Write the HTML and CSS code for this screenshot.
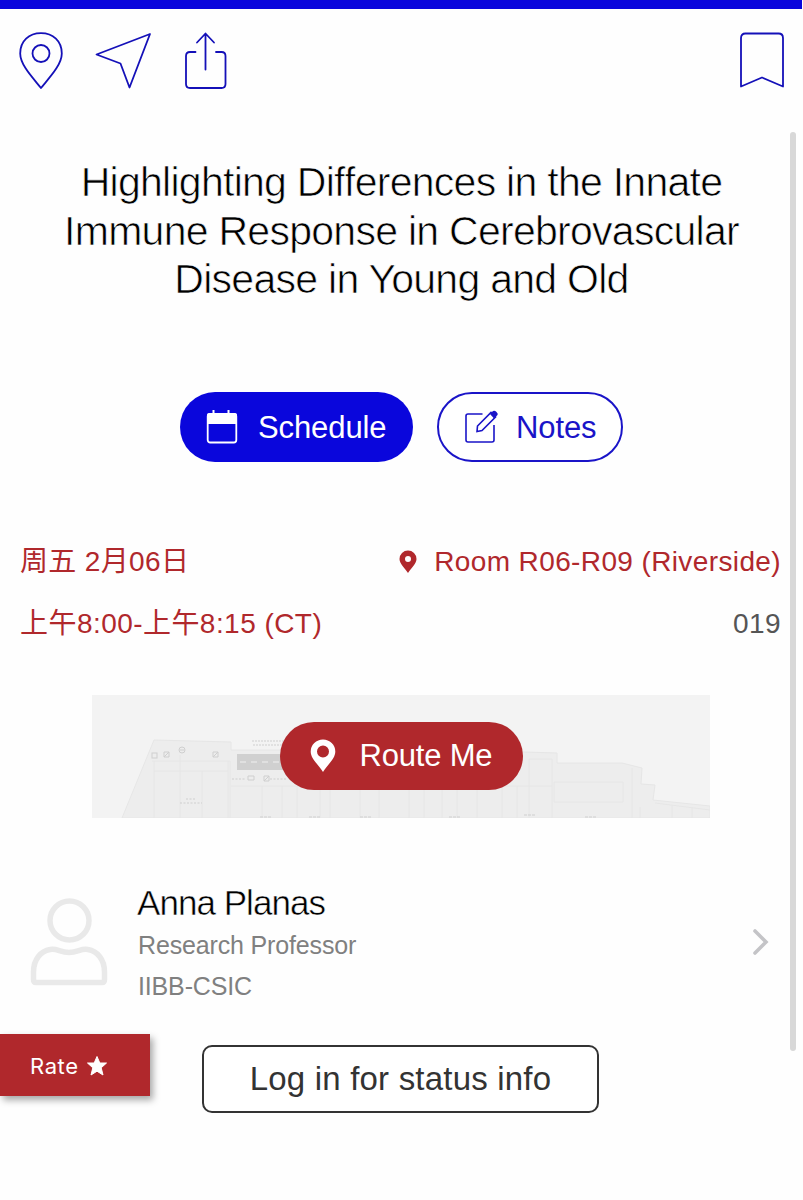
FILE: index.html
```
<!DOCTYPE html>
<html lang="zh">
<head>
<meta charset="UTF-8">
<meta name="viewport" content="width=device-width, initial-scale=1.0">
<title>Session</title>
<link rel="stylesheet" href="styles.css">
</head>
<body>
    <div class="topbar"></div>
    <div class="toolbar">
        <svg class="icon" width="44" height="58" viewBox="0 0 44 58">
            <path d="M22 56C14 46 1.200 33 1.200 21.500C1.200 9 10 1.200 22 1.200S42.800 9 42.800 21.500C42.800 33 30 46 22 56Z"/>
            <circle cx="22" cy="21.500" r="8.500"/>
        </svg>
        <svg class="icon icon-nav" width="58" height="58" viewBox="0 0 58 58">
            <path d="M56 2L2.500 22.500L26.500 31.500L35.500 55.500Z"/>
        </svg>
        <svg class="icon icon-share" width="44" height="58" viewBox="0 0 44 58">
            <path d="M11.500 20H6Q2 20 2 24V52Q2 56 6 56H37.500Q41.500 56 41.500 52V24Q41.500 20 37.500 20H32"/>
            <path d="M21.500 37.500V2M13 10.500L21.500 1.500L30 10.500"/>
        </svg>
        <svg class="icon icon-bookmark" width="46" height="58" viewBox="0 0 46 58">
            <path d="M2 54.500V6Q2 1.500 6.500 1.500H39.500Q44 1.500 44 6V54.500L23 45.500Z"/>
        </svg>
    </div>

    <h1 class="title">
        <span class="line">Highlighting Differences in the Innate</span>
        <span class="line">Immune Response in Cerebrovascular</span>
        <span class="line">Disease in Young and Old</span>
    </h1>

    <div class="actions">
        <button class="btn btn-schedule">
            <svg width="32" height="36" viewBox="0 0 32 36">
                <rect x="1.700" y="5" width="28.600" height="28.500" rx="2.500" fill="none" stroke="#fff" stroke-width="1.800"/>
                <path d="M1 15V6Q1 4 3.500 4H6.500V1H8.500V4H21.500V1H23.500V4H28.500Q31 4 31 6V15Z" fill="#fff"/>
            </svg>
            <span class="label">Schedule</span>
        </button>
        <button class="btn btn-notes">
            <svg width="36" height="36" viewBox="0 0 36 36">
                <path d="M18.500 5H4Q2 5 2 7V31Q2 33 4 33H28Q30 33 30 31V16" fill="none" stroke="#1a14c8" stroke-width="1.600"/>
                <path d="M13.500 17L27 3.500L31.500 8L18 21.500L13 22.500Z" fill="none" stroke="#1a14c8" stroke-width="1.600"/>
                <path d="M26 5L29 2Q30.500 1 32.500 3T33.500 6L30 9.500Z" fill="#1a14c8"/>
            </svg>
            <span class="label">Notes</span>
        </button>
    </div>

    <div class="details">
        <div class="row">
            <span class="date">周五 2月06日</span>
            <span class="room">
                <svg width="18" height="24" viewBox="0 0 18 24">
                    <path fill-rule="evenodd" d="M9 23C6 18.500 .5 13.500 .5 9A8.500 8.500 0 0 1 17.500 9C17.500 13.500 12 18.500 9 23ZM9 6A3 3 0 1 0 9 12A3 3 0 1 0 9 6Z" fill="#b0282c"/>
                </svg>
                Room R06-R09 (Riverside)
            </span>
        </div>
        <div class="row">
            <span class="time">上午8:00-上午8:15 (CT)</span>
            <span class="number">019</span>
        </div>
    </div>

    <div class="map">
        <svg class="plan" width="618" height="123" viewBox="0 0 618 123">
            <path d="M30 123L62 45L139 47V55H240L432 57L465 58V68H530L550 73L549 89L563 90L561 105L618 111V123Z" fill="#ededed" stroke="#e6e6e6"/>
            <path d="M60 66H138V123M62 76H136M62 66V123M88 60V123M110 76V123M136 66V123M139 91H460M170 91V123M190 91V123M205 91V123M228 91V123M238 91V123M268 91V123M287 91V123M317 91V123M332 91V123M350 91V123M365 91V123M385 91V123M410 91V123M425 91V123M437 64H460V123M437 64V123M462 87H531V107H462ZM540 73V123M563 108L618 115M548 112V123M580 110V123M600 112V123" fill="none" stroke="#e6e6e6"/>
            <rect x="145" y="59" width="60" height="16" fill="#d0d0d0"/>
            <g fill="none" stroke="#cfcfcf">
                <rect x="60" y="58" width="5" height="5"/>
                <path d="M72 57h5v5h-5zM72 62l5-5M121 57h5v5h-5zM121 62l5-5M156 81h6v4h-6zM172 81h5v5h-5zM172 86l5-5"/>
                <circle cx="90" cy="55" r="3"/>
                <path d="M88 55H92"/>
                <path d="M160 46H194M161 50H192" stroke-dasharray="2 1"/>
                <path d="M140 84H153M178 84H194M94 104H104M88 108H110" stroke-dasharray="2 1.500"/>
                <path d="M168 122H180M217 122H229M268 122H280M357 122H369M432 120H444M493 122H505" stroke-dasharray="3 1"/>
                <path d="M148 67H192" stroke="#e0e0e0" stroke-width="2" stroke-dasharray="6 5"/>
            </g>
        </svg>
        <button class="btn btn-route">
            <svg width="26" height="34" viewBox="0 0 26 34">
                <path fill-rule="evenodd" d="M13 33C9 26 .7 20 .7 12.500A12.300 12 0 0 1 25.300 12.500C25.300 20 17 26 13 33ZM13 6.500A6 6 0 1 0 13 18.500A6 6 0 1 0 13 6.500Z" fill="#fff"/>
            </svg>
            <span class="label">Route Me</span>
        </button>
    </div>

    <div class="speaker">
        <svg class="avatar" width="78" height="90" viewBox="0 0 78 90">
            <circle cx="39.500" cy="23.500" r="19.500"/>
            <path d="M6 85.500Q3.500 85.500 3.500 82.500V75C3.500 62 11 54 20 52.500C27 51 30 55.500 39 55.500S51 51 58 52.500C67 54 74.500 62 74.500 75V82.500Q74.500 85.500 72 85.500Z"/>
        </svg>
        <div class="speaker-info">
            <div class="name">Anna Planas</div>
            <div class="role">Research Professor</div>
            <div class="org">IIBB-CSIC</div>
        </div>
        <svg class="chevron" width="18" height="28" viewBox="0 0 18 28">
            <path d="M3 3L14 14L3 25" fill="none" stroke="#c4c4c7" stroke-width="3.600" stroke-linecap="round"/>
        </svg>
    </div>

    <button class="login">Log in for status info</button>

    <div class="rate">
        <span>Rate</span>
        <svg width="20" height="20" viewBox="0 0 20 20">
            <path d="M10 .5L12.800 7H19.500L14.200 11.800L16 19L10 15.200L4 19L5.800 11.800L.5 7H7.200Z" fill="#fff" stroke="#fff" stroke-linejoin="round"/>
        </svg>
    </div>
    <div class="scrollbar"></div>
</body>
</html>
```
FILE: styles.css
```
* {
    box-sizing: border-box;
}

body {
    font-family: "Liberation Sans", "Noto Sans CJK SC", sans-serif;
    margin: 0;
    height: 1200px;
    background-color: #fefefe;
    position: relative;
    overflow: hidden;
}

.topbar {
    height: 9px;
    margin-right: 1px;
    background: #0a06dc;
}

.toolbar {
    display: flex;
    padding: 23px 18px 0 19px;
}

.icon {
    fill: none;
    stroke: #1410b8;
    stroke-width: 1.8;
    stroke-linejoin: round;
    stroke-linecap: round;
}

.icon-nav {
    margin-left: 31px;
}

.icon-share {
    margin-left: 32px;
}

.icon-bookmark {
    margin-left: auto;
}

.title {
    margin: 68px 0 0;
    font-size: 41px;
    font-weight: normal;
    line-height: 48.5px;
    letter-spacing: -0.73px;
    text-align: center;
    color: #000;
    -webkit-text-stroke: 0.7px #fefefe;
}

.line {
    display: block;
    white-space: nowrap;
}

.actions {
    display: flex;
    justify-content: center;
    gap: 24px;
    margin-top: 88px;
}

.btn {
    display: flex;
    align-items: center;
    height: 70px;
    padding: 0;
    border: none;
    border-radius: 35px;
    font-family: inherit;
    font-size: 31px;
    color: #fff;
    white-space: nowrap;
}

.btn-schedule {
    width: 233px;
    padding-left: 26px;
    gap: 20px;
    background: #0a06dc;
}

.btn-schedule .label,
.btn-notes .label {
    padding-top: 2px;
    letter-spacing: -0.1px;
}

.btn-notes {
    width: 186px;
    padding-left: 25px;
    gap: 16px;
    border: 2px solid #1a14c8;
    background: #fff;
    color: #1a14c8;
}

.details {
    padding: 0 22px 0 20px;
    margin-top: 69px;
    font-size: 28px;
    color: #b0282c;
}

.row {
    display: flex;
    justify-content: space-between;
    height: 62px;
    line-height: 62px;
    white-space: nowrap;
}

.date {
    letter-spacing: 0.35px;
}

.time {
    letter-spacing: 0.45px;
}

.room {
    display: flex;
    align-items: center;
    gap: 17px;
    letter-spacing: 0.38px;
}

.number {
    color: #555;
    letter-spacing: 0.4px;
}

.map {
    display: grid;
    width: 618px;
    height: 123px;
    margin: 40px 0 0 92px;
    background: #f3f3f3;
}

.plan,
.btn-route {
    grid-area: 1 / 1;
}

.btn-route {
    justify-self: center;
    align-self: center;
    width: 243px;
    height: 68px;
    padding-left: 30px;
    gap: 24px;
    background: #b0282c;
    letter-spacing: -0.2px;
}

.speaker {
    display: flex;
    height: 130px;
    margin-top: 62px;
    padding: 0 33px 0 30px;
}

.avatar {
    margin-top: 17px;
    fill: none;
    stroke: #e9e9e9;
    stroke-width: 5.5;
}

.speaker-info {
    margin-left: 30px;
    white-space: nowrap;
}

.name {
    margin-left: -1px;
    font-size: 35px;
    line-height: 45px;
    letter-spacing: -0.95px;
    color: #000;
    -webkit-text-stroke: 0.5px #fefefe;
}

.role,
.org {
    font-size: 25px;
    line-height: 41px;
    letter-spacing: -0.15px;
    color: #808080;
}

.chevron {
    margin: 48px 0 0 auto;
}

.login {
    display: block;
    width: 397px;
    height: 68px;
    margin: 35px 0 0 202px;
    padding: 0;
    border: 2px solid #333;
    border-radius: 10px;
    background: #fff;
    font-family: inherit;
    font-size: 33px;
    letter-spacing: 0.2px;
    color: #333;
}

.rate {
    position: absolute;
    left: 0;
    top: 1034px;
    display: flex;
    align-items: center;
    gap: 8px;
    width: 150px;
    height: 62px;
    padding: 2px 0 0 30px;
    background: #b0282c;
    box-shadow: 3px 4px 7px rgba(0, 0, 0, 0.35);
    font-family: Inter, sans-serif;
    font-size: 22px;
    letter-spacing: 0.6px;
    color: #fff;
}

.scrollbar {
    position: absolute;
    top: 132px;
    right: 7px;
    width: 6px;
    height: 919px;
    border-radius: 3px;
    background: #d8d8d8;
}
```
